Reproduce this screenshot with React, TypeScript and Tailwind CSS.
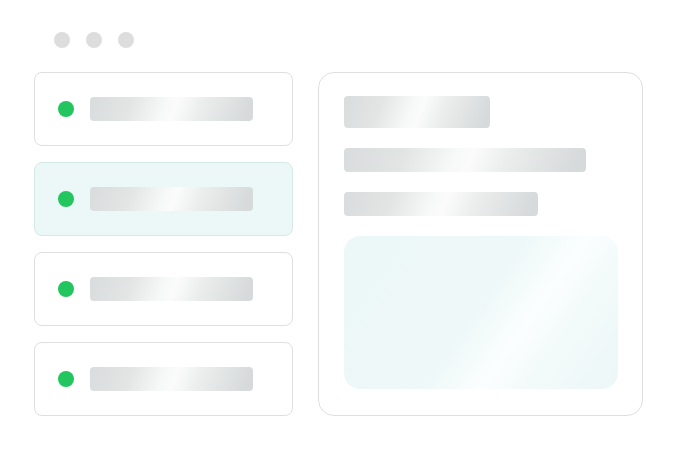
import React from 'react';

const shimmer =
  'bg-[linear-gradient(110deg,#d9dcdc_0%,#e3e5e5_25%,#f7f8f8_45%,#fbfbfb_52%,#eceeee_66%,#d7dada_95%)]';

function ListCard({ active }: { active?: boolean }) {
  return (
    <div
      className={`w-[259px] h-[74px] rounded-lg border-[1.5px] flex items-center gap-4 pl-[23px] ${
        active ? 'bg-[#ecf7f7] border-[#d5e9e6]' : 'bg-white border-[#dfdfdf]'
      }`}
    >
      <div className="size-4 rounded-full bg-[#22c55e] shrink-0" />
      <div className={`w-[163px] h-6 rounded-[4px] ${shimmer}`} />
    </div>
  );
}

export default function App() {
  return (
    <div className="w-[677px] h-[449px] bg-white pt-[32px] pl-[34px]">
      {/* window dots */}
      <div className="flex gap-4 pl-[20px]">
        <div className="size-4 rounded-full bg-[#dddddd]" />
        <div className="size-4 rounded-full bg-[#dddddd]" />
        <div className="size-4 rounded-full bg-[#dddddd]" />
      </div>

      <div className="flex gap-[25px] mt-[24px]">
        <div className="flex flex-col gap-4">
          <ListCard />
          <ListCard active />
          <ListCard />
          <ListCard />
        </div>

        <div className="w-[325px] h-[344px] rounded-2xl border-[1.5px] border-[#dfdfdf] bg-white pt-[23px] px-[25px] flex flex-col">
          <div className={`w-[146px] h-8 rounded-[4px] ${shimmer}`} />
          <div className={`w-[242px] h-6 rounded-[4px] mt-5 ${shimmer}`} />
          <div className={`w-[194px] h-6 rounded-[4px] mt-5 ${shimmer}`} />
          <div className="w-[274px] h-[153px] rounded-2xl mt-5 bg-[linear-gradient(125deg,#ecf7f7_0%,#eef8f8_48%,#fbfefe_64%,#f3fafa_76%,#ecf7f7_100%)]" />
        </div>
      </div>
    </div>
  );
}
